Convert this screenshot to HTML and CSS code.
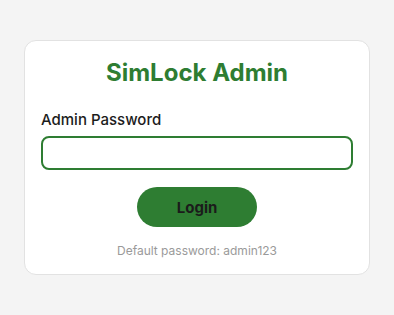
FILE: index.html
```html
<!DOCTYPE html>
<html lang="en">
<head>
<meta charset="utf-8">
<title>SimLock Admin</title>
<link rel="stylesheet" href="styles.css">
</head>
<body>
  <main class="card">
    <h1 class="title">SimLock Admin</h1>
    <form class="form">
      <label class="label" for="pw">Admin Password</label>
      <input class="input" id="pw" type="password">
      <button class="btn" type="button">Login</button>
    </form>
    <p class="hint">Default password: admin123</p>
  </main>
</body>
</html>
```

FILE: styles.css
```css
html, body {
  margin: 0;
  background: #f4f4f4;
  font-family: Inter, "Noto Sans", sans-serif;
}
body {
  padding: 40px 24px;
}
.card {
  background: #fff;
  border: 1px solid #e2e2e2;
  border-radius: 12px;
  padding: 17px 16px 16px;
  display: flex;
  flex-direction: column;
}
.title {
  margin: 0;
  text-align: center;
  color: #2e7d32;
  font-size: 24px;
  line-height: 29px;
  font-weight: 700;
}
.form {
  display: flex;
  flex-direction: column;
  margin-top: 24px;
}
.label {
  font-size: 15px;
  line-height: 18px;
  font-weight: 500;
  color: #1c1c1c;
}
.input {
  margin-top: 7px;
  height: 34px;
  box-sizing: border-box;
  border: 2px solid #2e7d32;
  border-radius: 8px;
  background: #fff;
  outline: none;
  padding: 0 10px;
}
.btn {
  align-self: center;
  margin-top: 17px;
  height: 40px;
  width: 120px;
  border: none;
  border-radius: 20px;
  background: #2e7d32;
  color: #1b1b1b;
  font-family: Inter, "Noto Sans", sans-serif;
  font-size: 15px;
  font-weight: 700;
}
.hint {
  margin: 16px 0 0;
  text-align: center;
  font-size: 12px;
  line-height: 15px;
  color: #9a9a9a;
}
```
